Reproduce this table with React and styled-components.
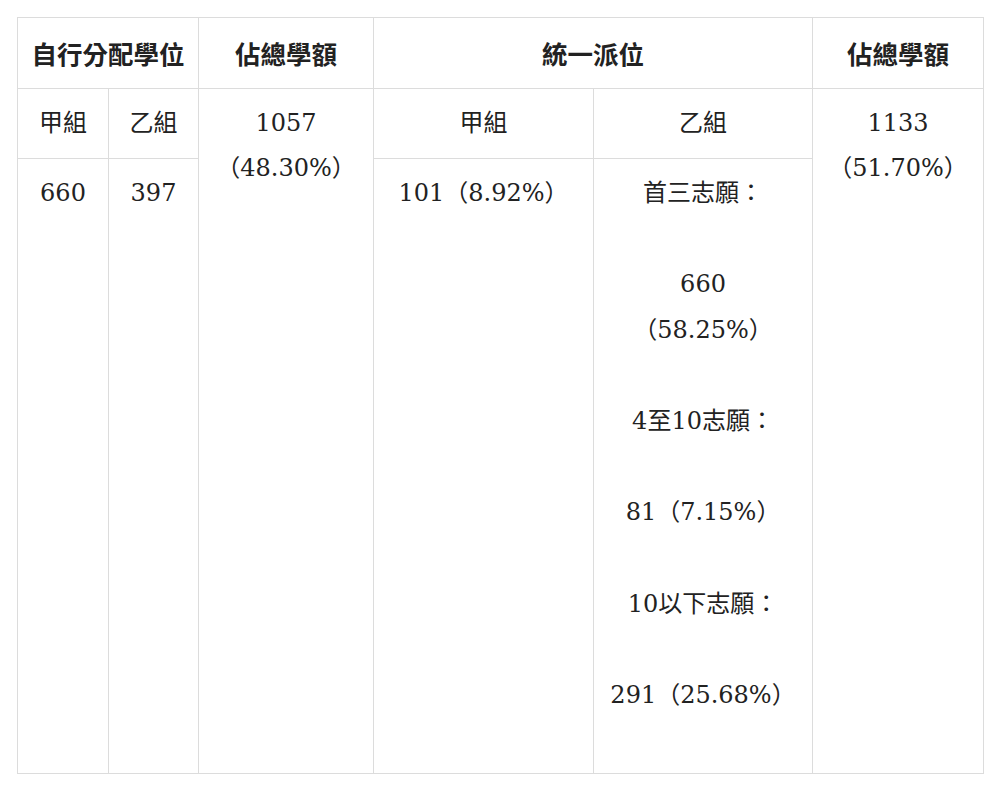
import React from 'react';
import styled, { createGlobalStyle } from 'styled-components';

const GlobalStyle = createGlobalStyle`
    body {
        margin: 0;
        background: #ffffff;
        font-family: "DejaVu Serif", "Noto Sans CJK TC", serif;
        color: #222222;
    }
`;

const Page = styled.div`
    padding: 17px;
`;

const Table = styled.table`
    width: 966px;
    table-layout: fixed;
    border-collapse: collapse;
    border: 1px solid #dcdcdc;
    font-size: 24px;
    line-height: 45.6px;
`;

const Head = styled.th`
    border: 1px solid #dcdcdc;
    padding: 12px 6px;
    font-size: 25.5px;
    font-weight: 700;
    text-align: center;
    vertical-align: top;
    font-family: "Noto Sans CJK TC", sans-serif;
`;

const Cell = styled.td`
    border: 1px solid #dcdcdc;
    padding: ${(p) => (p.$tall ? '12px 6px 55px' : '12px 6px')};
    text-align: center;
    vertical-align: top;
    font-weight: 400;
`;

const Para = styled.p`
    margin: 0 0 45.6px;
    &:last-child {
        margin-bottom: 0;
    }
`;

const choices = [
    ['首三志願：'],
    ['660', '（58.25%）'],
    ['4至10志願：'],
    ['81（7.15%）'],
    ['10以下志願：'],
    ['291（25.68%）'],
];

function Lines({ parts }) {
    return parts.map((t, i) => (
        <React.Fragment key={t}>
            {i > 0 && <br />}
            {t}
        </React.Fragment>
    ));
}

export default function App() {
    return (
        <Page>
            <GlobalStyle />
            <Table>
                <colgroup>
                    <col style={{ width: 91 }} />
                    <col style={{ width: 90 }} />
                    <col style={{ width: 175 }} />
                    <col style={{ width: 220 }} />
                    <col style={{ width: 219 }} />
                    <col style={{ width: 171 }} />
                </colgroup>
                <thead>
                    <tr>
                        <Head colSpan={2}>自行分配學位</Head>
                        <Head>佔總學額</Head>
                        <Head colSpan={2}>統一派位</Head>
                        <Head>佔總學額</Head>
                    </tr>
                </thead>
                <tbody>
                    <tr>
                        <Cell>甲組</Cell>
                        <Cell>乙組</Cell>
                        <Cell rowSpan={2}>
                            <Lines parts={['1057', '（48.30%）']} />
                        </Cell>
                        <Cell>甲組</Cell>
                        <Cell>乙組</Cell>
                        <Cell rowSpan={2}>
                            <Lines parts={['1133', '（51.70%）']} />
                        </Cell>
                    </tr>
                    <tr>
                        <Cell>660</Cell>
                        <Cell>397</Cell>
                        <Cell>101（8.92%）</Cell>
                        <Cell $tall>
                            {choices.map((c) => (
                                <Para key={c[0]}>
                                    <Lines parts={c} />
                                </Para>
                            ))}
                        </Cell>
                    </tr>
                </tbody>
            </Table>
        </Page>
    );
}
